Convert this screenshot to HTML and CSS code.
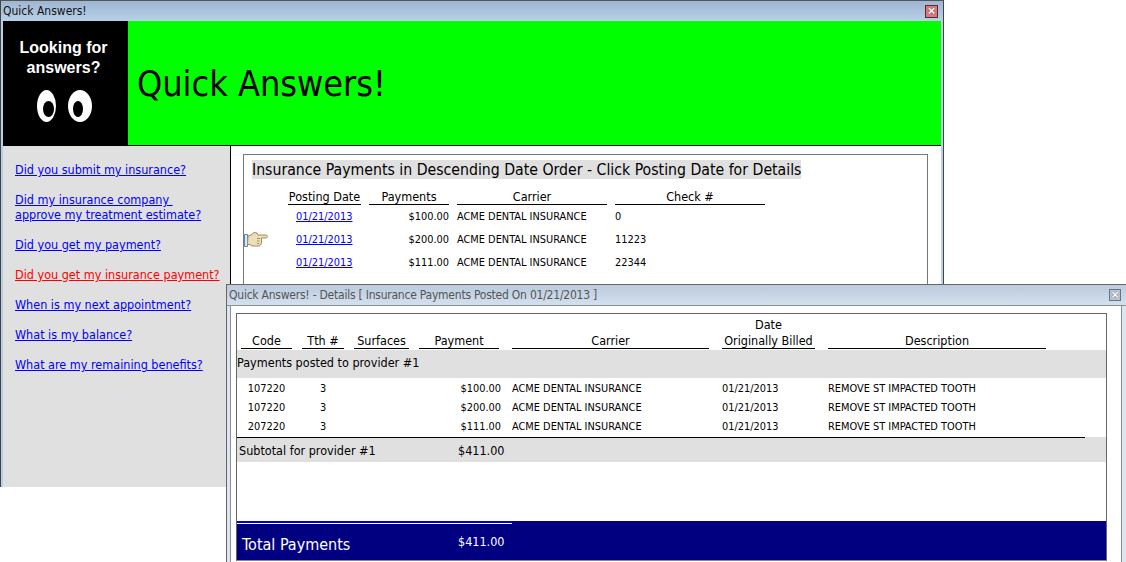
FILE: index.html
```html
<!DOCTYPE html>
<html lang="en">
<head>
  <meta charset="UTF-8" />
  <title>Quick Answers!</title>
  <link rel="stylesheet" href="styles.css">
</head>
<body>

<div class="window main-window">
  <div class="titlebar">
    <span>Quick Answers!</span>
    <span class="close-btn close-red">&#215;</span>
  </div>
  <div class="window-body">
    <div class="banner">
      <div class="logo">
        <div class="logo-text">Looking for<br>answers?</div>
        <svg class="eyes" width="55" height="32" viewBox="0 0 55 32">
          <ellipse cx="9.500" cy="16" rx="9.500" ry="16" fill="#fff"/>
          <ellipse cx="11.500" cy="19" rx="5.500" ry="8" fill="#000"/>
          <ellipse cx="43" cy="16" rx="12" ry="16" fill="#fff"/>
          <ellipse cx="41" cy="19" rx="5" ry="8" fill="#000"/>
        </svg>
      </div>
      <div class="banner-title">Quick Answers!</div>
    </div>
    <div class="content">
      <div class="sidebar">
        <a href="#">Did you submit my insurance?</a>
        <a href="#">Did my insurance company&nbsp;<br>approve my treatment estimate?</a>
        <a href="#">Did you get my payment?</a>
        <a href="#" class="current">Did you get my insurance payment?</a>
        <a href="#">When is my next appointment?</a>
        <a href="#">What is my balance?</a>
        <a href="#">What are my remaining benefits?</a>
      </div>
      <div class="panel">
        <div class="panel-box">
          <div class="panel-title"><span>Insurance Payments in Descending Date Order - Click Posting Date for Details</span></div>
          <div class="pay-row pay-head">
            <div>Posting Date</div>
            <div>Payments</div>
            <div>Carrier</div>
            <div>Check #</div>
          </div>
          <div class="pay-row">
            <a href="#">01/21/2013</a>
            <div class="num">$100.00</div>
            <div>ACME DENTAL INSURANCE</div>
            <div>0</div>
          </div>
          <div class="pay-row">
            <svg class="hand" width="24" height="16" viewBox="0 0 24 16">
              <path d="M0.500 2.500h3v12h-3z" fill="#dbe8f5" stroke="#5b87b8"/>
              <path d="M4 4l3-1 3-2.500 3 .5 1 2h8.500l1 1.500-1 1.500h-5v5l-1 2-1.500 1h-7l-2-1.500h-2.500z" fill="#e8dfbd" stroke="#a98a58"/>
              <path d="M13 6.500h3M13 9h2.500M13 11.500h2" stroke="#a98a58" fill="none"/>
            </svg>
            <a href="#">01/21/2013</a>
            <div class="num">$200.00</div>
            <div>ACME DENTAL INSURANCE</div>
            <div>11223</div>
          </div>
          <div class="pay-row">
            <a href="#">01/21/2013</a>
            <div class="num">$111.00</div>
            <div>ACME DENTAL INSURANCE</div>
            <div>22344</div>
          </div>
        </div>
      </div>
    </div>
  </div>
</div>

<div class="window details-window">
  <div class="titlebar titlebar-dim">
    <span>Quick Answers! - Details [ Insurance Payments Posted On 01/21/2013 ]</span>
    <span class="close-btn">&#215;</span>
  </div>
  <div class="details-body">
    <div class="details-box">
      <div class="det-row det-head">
        <div>Code</div>
        <div>Tth #</div>
        <div>Surfaces</div>
        <div>Payment</div>
        <div>Carrier</div>
        <div>Date<br>Originally Billed</div>
        <div>Description</div>
      </div>
      <div class="band provider">Payments posted to provider #1</div>
      <div class="det-lines">
        <div class="det-row">
          <div class="center">107220</div><div class="center">3</div><div></div>
          <div class="num">$100.00</div>
          <div>ACME DENTAL INSURANCE</div><div>01/21/2013</div><div>REMOVE ST IMPACTED TOOTH</div>
        </div>
        <div class="det-row">
          <div class="center">107220</div><div class="center">3</div><div></div>
          <div class="num">$200.00</div>
          <div>ACME DENTAL INSURANCE</div><div>01/21/2013</div><div>REMOVE ST IMPACTED TOOTH</div>
        </div>
        <div class="det-row">
          <div class="center">207220</div><div class="center">3</div><div></div>
          <div class="num">$111.00</div>
          <div>ACME DENTAL INSURANCE</div><div>01/21/2013</div><div>REMOVE ST IMPACTED TOOTH</div>
        </div>
      </div>
      <div class="band subtotal">
        <div class="subtotal-label">Subtotal for provider #1</div>
        <div class="subtotal-amount">$411.00</div>
      </div>
      <div class="total">
        <div class="total-main">
          <div class="total-label">Total Payments</div>
          <div class="total-amount">$411.00</div>
        </div>
      </div>
    </div>
  </div>
</div>

</body>
</html>
```

FILE: styles.css
```css
:root {
  --frame: #b9cfe6;
  --frame-dim: #dce6f0;
  --band: #e0e0e0;
  --navy: #000080;
}

html, body {
  margin: 0;
  padding: 0;
  height: 562px;
  overflow: hidden;
  background-color: white;
}

body {
  font-family: "DejaVu Sans", Tahoma, sans-serif;
  font-stretch: condensed;
  font-size: 12.500px;
  color: #000;
}

/* the two windows sit on a free desktop */
.window {
  position: absolute;
  box-sizing: border-box;
  border: 1px solid #444;
  border-bottom: 0;
  display: flex;
  flex-direction: column;
}

.main-window {
  left: 0;
  top: 0;
  width: 944px;
  height: 487px;
  background-color: var(--frame);
  border-top-color: #555;
  padding: 0 2px;
}

.details-window {
  left: 226px;
  top: 284px;
  width: 900px;
  height: 278px;
  background-color: var(--frame-dim);
  border-color: #666;
  border-right: 0;
}

.titlebar {
  height: 20px;
  flex: none;
  display: flex;
  align-items: center;
  justify-content: space-between;
  background: linear-gradient(#9fb6d3, #b9d0e8);
  margin: 0 -2px;
  padding: 0 4px 0 2px;
  font-size: 12px;
  color: #111;
}

.titlebar-dim {
  box-sizing: border-box;
  height: 21px;
  background: linear-gradient(#bccbdd, #d3e0ee);
  color: #555;
  margin: 0;
  padding-right: 5px;
  border-bottom: 1px solid #8a8f96;
  letter-spacing: -0.230px;
}

.close-btn {
  box-sizing: border-box;
  width: 12px;
  height: 12px;
  border: 1px solid #6b7280;
  background-color: #b8c4d4;
  color: white;
  text-shadow: 0 0 1px #222;
  font: bold 13px/9px "Liberation Sans", sans-serif;
  letter-spacing: 0;
  text-align: center;
}

.close-red {
  width: 13px;
  height: 13px;
  border-color: #5c2a35;
  background-color: #d8787a;
  margin-right: 1px;
  line-height: 10px;
}

.window-body {
  flex: 1;
  display: flex;
  flex-direction: column;
  min-height: 0;
}

.banner {
  display: flex;
  height: 124px;
  flex: none;
  background-color: #00ff00;
  border-bottom: 1px solid #000;
}

.logo {
  width: 125px;
  background-color: #000;
  color: white;
  text-align: center;
  font: bold 16px/20px "Liberation Sans", sans-serif;
  padding: 17px 4px 0 0;
  box-sizing: border-box;
}

.eyes {
  display: block;
  margin: 12px 0 0 34px;
}

.banner-title {
  font-size: 35.700px;
  padding: 42px 0 0 9px;
}

.content {
  flex: 1;
  display: flex;
  min-height: 0;
}

.sidebar {
  width: 228px;
  flex: none;
  box-sizing: border-box;
  background-color: var(--band);
  border-right: 1px solid #000;
  padding: 16px 0 0 12px;
  display: flex;
  flex-direction: column;
  align-items: flex-start;
  gap: 15px;
  line-height: 15px;
}

.sidebar a {
  color: #0000ff;
}

.sidebar a.current {
  color: #ff0000;
}

.panel {
  flex: 1;
  background-color: white;
  padding: 8px 13px 0 12px;
}

.panel-box {
  position: relative;
  height: 250px;
  border: 1px solid #777;
  padding: 5px 0 0 8px;
}

.panel-title {
  font-size: 15.700px;
  line-height: 19px;
  margin-bottom: 8px;
}

.panel-title span {
  background-color: var(--band);
  display: inline-block;
}

.pay-row {
  position: relative;
  display: grid;
  grid-template-columns: 73px 80px 150px 150px;
  column-gap: 8px;
  margin-left: 36px;
  height: 23px;
  align-items: center;
  font-size: 10.900px;
}

.pay-row a {
  color: #0000ff;
  justify-self: start;
  margin-left: 8px;
}

.pay-head {
  height: 18px;
  font-size: 12.500px;
  align-items: end;
}

.pay-head div {
  text-align: center;
  border-bottom: 1px solid #000;
  line-height: 14px;
}

.num {
  text-align: right;
}

.hand {
  position: absolute;
  left: -44px;
  top: 4px;
}

.details-body {
  flex: 1;
  display: flex;
  min-height: 0;
  box-sizing: border-box;
  background-color: white;
  border: 1px solid #8a8f96;
  border-width: 0 1px;
  margin: 0 4px 0 3px;
  padding: 7px 14px 1px 5px;
}

.details-box {
  box-sizing: border-box;
  flex: 1;
  border: 1px solid #666;
  border-bottom-color: #888;
  display: flex;
  flex-direction: column;
}

.det-row {
  display: grid;
  grid-template-columns: 51px 42px 55px 80px 200px 96px 221px;
  column-gap: 10px;
  padding-left: 4px;
  font-size: 10.900px;
  align-items: center;
}

/* these three columns start 3px further along */
.det-row > :nth-child(n+5) {
  margin-left: 3px;
}

.det-lines .num {
  margin-right: -2px;
}

.det-head {
  height: 35px;
  font-size: 12.500px;
  align-items: end;
}

.det-head div {
  text-align: center;
  background: linear-gradient(#000, #000) bottom / 100% 1px no-repeat;
  line-height: 16px;
}

.center {
  text-align: center;
}

.band {
  background-color: var(--band);
}

.provider {
  height: 28px;
  margin-top: 1px;
  line-height: 26px;
}

.det-lines {
  padding: 1px 0;
  height: 57px;
  display: flex;
  flex-direction: column;
  justify-content: flex-end;
}

.det-lines .det-row {
  height: 19px;
}

.subtotal {
  box-sizing: border-box;
  height: 25px;
  padding-top: 2px;
  display: flex;
  align-items: center;
  position: relative;
}

/* rule stops short of the right edge */
.subtotal::before {
  content: "";
  position: absolute;
  left: 0;
  top: 0;
  width: 848px;
  border-top: 1px solid #000;
}

.subtotal-label {
  width: 221px;
  padding-left: 2px;
  box-sizing: border-box;
  white-space: nowrap;
}

.total {
  margin-top: auto;
  height: 39px;
  background-color: var(--navy);
  color: white;
}

.total-main {
  box-sizing: border-box;
  width: 275px;
  height: 3px;
  border-top: 2px solid #0000d8;
  border-bottom: 1px solid white;
  display: flex;
}

.total-label {
  font-size: 16px;
  padding: 12px 0 0 5px;
  width: 221px;
  box-sizing: border-box;
  white-space: nowrap;
}

.total-amount {
  padding-top: 11px;
}
```
